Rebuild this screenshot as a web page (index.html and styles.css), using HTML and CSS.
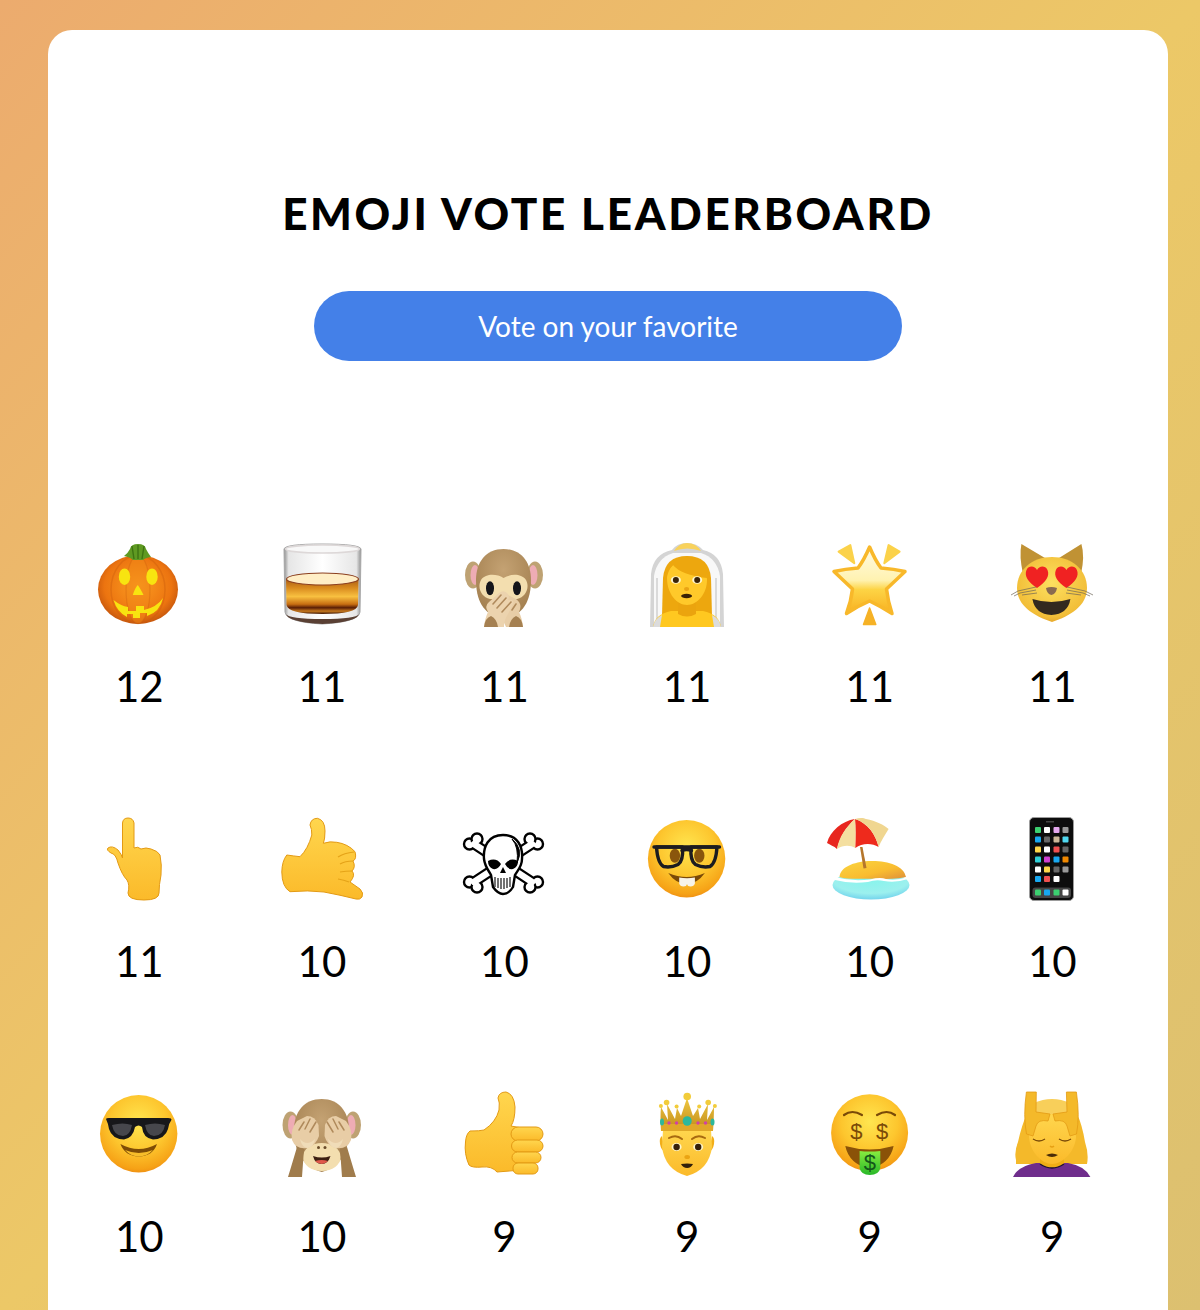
FILE: index.html
```html
<!doctype html>
<html lang="en">
<head>
    <meta charset="UTF-8">
    <title>Emoji Vote Leaderboard</title>
    <link rel="stylesheet" href="styles.css">
</head>
<body>
    <svg class="shared-defs" aria-hidden="true">
        <defs>
            <linearGradient id="skin" x1="0" y1="0" x2="0" y2="1">
                <stop offset="0" stop-color="#ffd64e"/>
                <stop offset="1" stop-color="#fbba2a"/>
            </linearGradient>
            <radialGradient id="face" cx=".5" cy=".36" r=".66">
                <stop offset="0" stop-color="#ffe650"/>
                <stop offset=".55" stop-color="#fdc62e"/>
                <stop offset=".9" stop-color="#f6a216"/>
                <stop offset="1" stop-color="#ee8c12"/>
            </radialGradient>
            <radialGradient id="fur" cx=".5" cy=".3" r=".75">
                <stop offset="0" stop-color="#c4a273"/>
                <stop offset="1" stop-color="#a07c4c"/>
            </radialGradient>
            <radialGradient id="pumpkin" cx=".5" cy=".45" r=".6">
                <stop offset="0" stop-color="#fb9c20"/>
                <stop offset=".7" stop-color="#ec7410"/>
                <stop offset="1" stop-color="#b84c0c"/>
            </radialGradient>
            <linearGradient id="glass" x1="0" y1="0" x2="1" y2="0">
                <stop offset="0" stop-color="#8f8f8f"/>
                <stop offset=".06" stop-color="#e6e6e6"/>
                <stop offset=".5" stop-color="#ffffff"/>
                <stop offset=".94" stop-color="#e6e6e6"/>
                <stop offset="1" stop-color="#8f8f8f"/>
            </linearGradient>
            <linearGradient id="whisky" x1="0" y1="0" x2="0" y2="1">
                <stop offset="0" stop-color="#a85c14"/>
                <stop offset=".25" stop-color="#d88a1e"/>
                <stop offset=".5" stop-color="#f8c040"/>
                <stop offset=".72" stop-color="#c86e12"/>
                <stop offset=".82" stop-color="#5a1e06"/>
                <stop offset=".92" stop-color="#c87a1e"/>
                <stop offset="1" stop-color="#3e1606"/>
            </linearGradient>
            <linearGradient id="star" x1="0" y1="0" x2="0" y2="1">
                <stop offset="0" stop-color="#fffbe6"/>
                <stop offset=".5" stop-color="#fff2b0"/>
                <stop offset=".64" stop-color="#fdd445"/>
                <stop offset="1" stop-color="#f8b020"/>
            </linearGradient>
            <radialGradient id="catface" cx=".5" cy=".4" r=".65">
                <stop offset="0" stop-color="#fde060"/>
                <stop offset=".8" stop-color="#f2be38"/>
                <stop offset="1" stop-color="#e09c28"/>
            </radialGradient>
            <linearGradient id="sand" x1="0" y1="0" x2="1" y2="1">
                <stop offset="0" stop-color="#fbd640"/>
                <stop offset=".6" stop-color="#f9bc30"/>
                <stop offset="1" stop-color="#dd8f3a"/>
            </linearGradient>
            <radialGradient id="water" cx=".5" cy=".3" r=".7">
                <stop offset="0" stop-color="#86f4ec"/>
                <stop offset=".7" stop-color="#9cf0ee"/>
                <stop offset="1" stop-color="#74d4ec"/>
            </radialGradient>
            <linearGradient id="gold" x1="0" y1="0" x2="0" y2="1">
                <stop offset="0" stop-color="#f0c840"/>
                <stop offset="1" stop-color="#c08a1a"/>
            </linearGradient>
            <linearGradient id="bill" x1="0" y1="0" x2="0" y2="1">
                <stop offset="0" stop-color="#88ec40"/>
                <stop offset="1" stop-color="#28b828"/>
            </linearGradient>
        </defs>
    </svg>

    <main class="card">
        <h1 class="title">EMOJI VOTE LEADERBOARD</h1>
        <a class="vote-link" href="#">Vote on your favorite</a>

        <div class="board">
            <!-- jack-o-lantern -->
            <div class="entry">
                <svg class="emoji" viewBox="0 0 84 84">
                    <ellipse cx="41" cy="47.5" rx="40" ry="34.5" fill="url(#pumpkin)"/>
                    <ellipse cx="41" cy="47.5" rx="27" ry="34" fill="none" stroke="#c65a0c" stroke-opacity=".35" stroke-width="1.5"/>
                    <ellipse cx="41" cy="47.5" rx="12" ry="34" fill="#f28a18" fill-opacity=".5" stroke="#c65a0c" stroke-opacity=".3" stroke-width="1.2"/>
                    <path d="M27 14 Q31 11 33 7 Q34 2 41 2 Q48 2 49 7 Q51 11 54 15 Q48 16 46 18 L36 18 Q33 15 27 14Z" fill="#5f9a22"/>
                    <path d="M35 4 L37 17 M41 3 L41 17 M47 4 L45 17" stroke="#3f7412" stroke-width="1.4" fill="none"/>
                    <ellipse cx="27.5" cy="34.7" rx="5.7" ry="8.3" fill="#f8e410"/>
                    <ellipse cx="55" cy="34.7" rx="5.7" ry="8.3" fill="#f8e410"/>
                    <path d="M40.8 43 Q43 46 46.5 53 L35.8 53 Q38 46 40.8 43Z" fill="#f8e410"/>
                    <path d="M16.5 58 Q24 64 31 65 L31 69 L39 69 L39 64 L47 64 L47 68 Q60 65 66 56 Q63 70 50 74 L50 71 L43 71 L43 76 L36 76 L36 72 L30 72 L30 75 Q20 70 16.5 58Z" fill="#f8e410"/>
                </svg>
                <div class="count">12</div>
            </div>

            <!-- tumbler glass -->
            <div class="entry">
                <svg class="emoji" viewBox="0 0 84 84">
                    <path d="M4 7 L5 70 Q6 80 42 82 Q79 80 80 70 L81 7 Q80 2 42 2 Q5 2 4 7Z" fill="url(#glass)" stroke="#a8a8a8" stroke-width="1"/>
                    <ellipse cx="42.5" cy="7" rx="37" ry="4" fill="#f8f8f8" stroke="#ddd8d8" stroke-width="1.5"/>
                    <path d="M6 37 L6.5 63 Q8 72 42.5 72 Q77 72 78 63 L78.5 37Z" fill="url(#whisky)"/>
                    <ellipse cx="42.5" cy="37" rx="36" ry="6" fill="#ffeec6" stroke="#8c4020" stroke-width="1.2"/>
                    <path d="M6 72 Q8 80 42.5 82 Q77 80 79 72 Q76 77 42.5 77 Q9 77 6 72Z" fill="#5a4034"/>
                </svg>
                <div class="count">11</div>
            </div>

            <!-- speak-no-evil monkey -->
            <div class="entry">
                <svg class="emoji" viewBox="0 0 84 84">
                    <ellipse cx="11" cy="33" rx="8" ry="13.5" fill="#bea273"/>
                    <ellipse cx="13" cy="33" rx="4.5" ry="10" fill="#eeacb4"/>
                    <ellipse cx="73" cy="33" rx="8" ry="13.5" fill="#bea273"/>
                    <ellipse cx="71" cy="33" rx="4.5" ry="10" fill="#eeacb4"/>
                    <path d="M41.5 7 C24 7 14 20 14 38 C14 56 20 74 41.5 76 C63 74 69 56 69 38 C69 20 59 7 41.5 7Z" fill="url(#fur)"/>
                    <path d="M41.5 36 C35 32 24 31 19 38 C15 45 19 55 28 57 L55 57 C64 55 68 45 64 38 C59 31 48 32 41.5 36Z" fill="#f3deaf"/>
                    <ellipse cx="28" cy="46.3" rx="4" ry="7" fill="#15151a"/>
                    <ellipse cx="55" cy="46.3" rx="4" ry="7" fill="#15151a"/>
                    <path d="M61 85 Q60 76 57 70 Q61 62 54 57 L44 52 Q38 50 37 56 L38 72 L44 85Z" fill="#e8cda6"/>
                    <path d="M22 85 Q23 76 26 70 Q22 64 27 60 L37 51 Q42 47 46 52 Q48 55 46 58 L50 58 Q53 60 50 64 L46 72 Q42 78 42 85Z" fill="#ecd3ae"/>
                    <path d="M22 85 Q23 76 29 74 Q35 77 36 85Z M61 85 Q60 76 54 74 Q48 77 47 85Z" fill="#a58051"/>
                    <path d="M31 62 L39 53 M35 66 L44 56 M40 70 L49 60 M54 62 L50 68" stroke="#b08a5c" stroke-width="1.6" fill="none" stroke-linecap="round"/>
                </svg>
                <div class="count">11</div>
            </div>

            <!-- bride with veil -->
            <div class="entry">
                <svg class="emoji" viewBox="0 0 84 84">
                    <path d="M5 85 L6 32 Q8 12 27 8 Q32 1 42 1 Q52 1 58 8 Q76 12 78 32 L79 85Z" fill="#d4d4d4"/>
                    <path d="M9 85 L9 34 Q12 16 28 11 L56 11 Q72 16 75 34 L75 85Z" fill="#f8f8f8"/>
                    <path d="M12 80 L12 36 M71 80 L71 36" stroke="#cfcfcf" stroke-width="1.5" fill="none"/>
                    <path d="M29 9 Q34 1 42 1 Q51 1 56 9 Q42 4 29 9Z" fill="#f8d25c"/>
                    <path d="M17 74 L18 36 Q20 14 42 14 Q64 14 66 36 L67 74Z" fill="#eda70e"/>
                    <path d="M8 85 Q10 72 26 69 L58 69 Q74 72 76 85Z" fill="#ffc820"/>
                    <path d="M8 85 Q10 76 17 73 L15 85Z M76 85 Q74 76 67 73 L69 85Z" fill="#dcdcdc"/>
                    <path d="M33 58 L51 58 L51 72 Q42 77 33 72Z" fill="#eba40e"/>
                    <path d="M22 36 C22 24 30 20 42 20 C54 20 62 26 62 38 C62 52 52 63 42 63 C32 63 22 52 22 36Z" fill="#ffc92a"/>
                    <path d="M21 38 Q23 28 28 23 Q36 33 62 36 Q63 24 54 17 Q42 12 30 17 Q20 24 21 38Z" fill="#eda70e"/>
                    <ellipse cx="30.9" cy="38" rx="5" ry="3.8" fill="#fff7d0"/>
                    <circle cx="30.9" cy="38" r="3" fill="#3a2408"/>
                    <ellipse cx="52.2" cy="38" rx="5" ry="3.8" fill="#fff7d0"/>
                    <circle cx="52.2" cy="38" r="3" fill="#3a2408"/>
                    <ellipse cx="41.6" cy="47" rx="2.6" ry="2" fill="#eaa414"/>
                    <ellipse cx="41.6" cy="54" rx="5.5" ry="2.2" fill="#3a2206"/>
                </svg>
                <div class="count">11</div>
            </div>

            <!-- glowing star -->
            <div class="entry">
                <svg class="emoji" viewBox="0 0 84 84">
                    <path d="M41.6 5 Q47 18 53 26 Q66 27 77 29.5 Q68 38 58.500 47 Q60 60 64 71.5 Q52 64 41.6 59 Q30 64 18.5 71.5 Q23 60 24.5 47 Q15 38 6 29.5 Q17 27 30 26 Q36 18 41.6 5Z" fill="url(#star)" stroke="#f8b82a" stroke-width="3.5" stroke-linejoin="round"/>
                    <path d="M10.6 9.7 L22.3 3 L26.3 21.3Z" fill="#fbd24a" stroke="#fbd24a" stroke-width="2" stroke-linejoin="round"/>
                    <path d="M71.6 9.7 L60.6 3 L56.3 21.3Z" fill="#fbd24a" stroke="#fbd24a" stroke-width="2" stroke-linejoin="round"/>
                    <path d="M41.6 66 L35.5 82.5 L47.8 82.5Z" fill="#f6b226" stroke="#f6b226" stroke-width="1.5" stroke-linejoin="round"/>
                </svg>
                <div class="count">11</div>
            </div>

            <!-- heart-eyes cat -->
            <div class="entry">
                <svg class="emoji" viewBox="0 0 84 84">
                    <path d="M11.4 2 L35 16 L13 32 Q9 14 11.4 2Z M71.4 2 L49 16 L71 32 Q75 14 71.4 2Z" fill="#c09234"/>
                    <path d="M42 15 C22 15 7 28 7 46 C7 64 24 74 42 80 C60 74 77 64 77 46 C77 28 62 15 42 15Z" fill="url(#catface)"/>
                    <path d="M27 46 C18 40 14 34 16.5 28 C19 23 25 24 27 28 C29 24 35 23 37.5 28 C40 34 36 40 27 46Z" fill="#f02222"/>
                    <path d="M56.4 46 C47.4 40 43.4 34 45.9 28 C48.4 23 54.4 24 56.4 28 C58.4 24 64.4 23 66.9 28 C69.4 34 65.4 40 56.4 46Z" fill="#f02222"/>
                    <path d="M36 46 Q41.4 44 47 46 Q46 52 41.4 53 Q37 52 36 46Z" fill="#8a6a50"/>
                    <path d="M26 45 L8 49 L1 53 M26 48 L10 51 L4 54 M27 51 L12 53 M57 45 L75 49 L83 53 M57 48 L73 51 L80 54 M56 51 L71 53" stroke="#6d6458" stroke-width=".7" fill="none"/>
                    <path d="M22.4 57 Q41.4 63 60.4 57 Q58 72 41.4 73 Q25 72 22.4 57Z" fill="#33291f"/>
                </svg>
                <div class="count">11</div>
            </div>

            <!-- point up -->
            <div class="entry">
                <svg class="emoji" viewBox="0 0 84 84">
                    <path d="M25.5 6 Q26 1 31 1 Q36 1 37 6 L37 31 Q41 29 44 32 Q49 30 54 32 Q61 34 63 38 Q65 48 64 58 Q62 68 62 76 Q62 83 47 83 Q31 83 31 76 Q33 68 30 63 Q25 58 21 46 Q19 37 14 36 Q9 33 11 31 Q15 28 21 33 Q25 38 25.5 41Z" fill="url(#skin)" stroke="#e39a14" stroke-width="1"/>
                </svg>
                <div class="count">11</div>
            </div>

            <!-- call me hand -->
            <div class="entry">
                <svg class="emoji" viewBox="0 0 84 84">
                    <path d="M6.8 38 Q14 39 20 39.7 Q28 32 31.8 18 Q32 12 30 8 Q31 1.3 37.4 1.3 Q45 3 45 14 Q45 22 43.4 26.3 Q50 24 56.8 25.3 Q68 27 75 34.7 Q77 42 73 44 Q76 50 72 54 Q76 58 70 65 L80 72 Q84 76 82 80 Q80 83 76 82 Q60 78 44 75 Q28 73 10 74.7 Q2 70 1.8 55 Q2 44 6.8 38Z" fill="url(#skin)" stroke="#e39a14" stroke-width="1"/>
                    <path d="M74 35 Q64 36 58 40 M73 44 Q65 44 60 47 M72 54 Q66 54 60 55 M69 65 Q64 63 58 62" stroke="#e5a318" stroke-width="1.2" fill="none"/>
                </svg>
                <div class="count">10</div>
            </div>

            <!-- skull and crossbones -->
            <div class="entry">
                <svg class="emoji" viewBox="0 0 84 84">
                    <g class="bone-line">
                        <path d="M12 27 L70 65 M70 27 L12 65" stroke="#000" stroke-width="11"/>
                        <circle cx="7.5" cy="27" r="5.5" fill="#fff" stroke="#000" stroke-width="2.4"/>
                        <circle cx="15" cy="22" r="5.5" fill="#fff" stroke="#000" stroke-width="2.4"/>
                        <circle cx="75.5" cy="27" r="5.5" fill="#fff" stroke="#000" stroke-width="2.4"/>
                        <circle cx="68" cy="22" r="5.5" fill="#fff" stroke="#000" stroke-width="2.4"/>
                        <circle cx="7.5" cy="65" r="5.5" fill="#fff" stroke="#000" stroke-width="2.4"/>
                        <circle cx="15" cy="70" r="5.5" fill="#fff" stroke="#000" stroke-width="2.4"/>
                        <circle cx="75.5" cy="65" r="5.5" fill="#fff" stroke="#000" stroke-width="2.4"/>
                        <circle cx="68" cy="70" r="5.5" fill="#fff" stroke="#000" stroke-width="2.4"/>
                        <path d="M12 27 L70 65 M70 27 L12 65" stroke="#fff" stroke-width="6.4"/>
                    </g>
                    <path d="M41 18 C26 18 21 30 22 42 C23 50 27 54 29 58 L31 70 Q36 77 41 77 Q47 77 51 70 L53 58 C55 54 60 50 60 42 C61 30 56 18 41 18Z" fill="#fff" stroke="#000" stroke-width="2.4"/>
                    <path d="M50 22 Q57 30 55 46 Q62 32 50 22Z" fill="#000" stroke="#000" stroke-width="1"/>
                    <path d="M26 44 Q34 40 39 47 Q36 53 31 52 Q26 50 26 44Z M56 44 Q48 40 43 47 Q46 53 51 52 Q56 50 56 44Z" fill="#000"/>
                    <path d="M41 50 L44 56 L38 56Z" fill="#000"/>
                    <path d="M33 60 L33 70 M36 61 L36 71 M39 61 L39 72 M42 61 L42 72 M45 61 L45 71 M48 60 L48 70" stroke="#000" stroke-width="1.1"/>
                </svg>
                <div class="count">10</div>
            </div>

            <!-- nerd face -->
            <div class="entry">
                <svg class="emoji" viewBox="0 0 84 84">
                    <circle cx="41.6" cy="41.7" r="38.7" fill="url(#face)"/>
                    <ellipse cx="29.9" cy="38.7" rx="5.2" ry="7" fill="#8a560c"/>
                    <ellipse cx="54.3" cy="38.7" rx="5.2" ry="7" fill="#8a560c"/>
                    <path d="M11.5 30 L37.5 30 Q38.5 44 33 47.5 Q26 51 18.5 49.5 Q12.5 46 11.5 30Z M46 30 L72 30 Q71 46 65 49.5 Q57.5 51 50.5 47.5 Q45 44 46 30Z" fill="none" stroke="#1c1c20" stroke-width="3.4" stroke-linejoin="round"/>
                    <path d="M9 30 L74.5 30 M37 33.5 Q41.6 31.5 46.5 33.5" fill="none" stroke="#1c1c20" stroke-width="3.4" stroke-linecap="round"/>
                    <path d="M23.2 56 Q41.6 64 59.9 56 Q52 67 41.6 67 Q31 67 23.2 56Z" fill="#7a4a08"/>
                    <path d="M34.2 60.5 Q42 62 49.9 60.5 L49.9 66.5 Q49 69.5 45.5 69.5 Q42.5 69.5 42 67 Q41.5 69.5 38.5 69.5 Q35 69.5 34.2 66.5Z" fill="#f7f3e8"/>
                </svg>
                <div class="count">10</div>
            </div>

            <!-- desert island -->
            <div class="entry">
                <svg class="emoji" viewBox="0 0 84 84">
                    <ellipse cx="43" cy="68" rx="38.5" ry="14.5" fill="url(#water)"/>
                    <path d="M11.6 60 C12 50 26 45 40 44 C58 43 76 48 78 60 C68 62 60 62 50 62 C36 61 20 63 11.6 60Z" fill="url(#sand)"/>
                    <path d="M7 60 Q24 65 42 62.5 Q52 60 58 62 Q68 64 80 60 L80 62 Q68 66 56 64 Q48 62 40 65 Q22 67 7 63Z" fill="#fff"/>
                    <path d="M32 30 L34.5 30 L38.5 51 L35.5 51.5Z" fill="#b5762c"/>
                    <path d="M-1 26 C2 14 14 4 27 2 C18 10 12 20 9 32 C6 29 2 28 -1 26Z" fill="#e8261e"/>
                    <path d="M27 2 C18 10 11 20 9 32 C15 28 22 28 27.3 31 C28 20 28 10 27 2Z" fill="#f4dfa0"/>
                    <path d="M27 2 C28 10 28 20 27.3 31 C34 26 44 26 50.6 30 C48 18 40 6 27 2Z" fill="#ee2a1c"/>
                    <path d="M27 2 C31 0.5 36 0.5 38 2 C48 4 56 8 60.6 12 C57 18 53 24 50.6 30 C48 18 40 6 27 2Z" fill="#f0d690"/>
                </svg>
                <div class="count">10</div>
            </div>

            <!-- mobile phone -->
            <div class="entry">
                <svg class="emoji" viewBox="0 0 84 84">
                    <rect x="19.5" y="0.5" width="44" height="83" rx="4.5" fill="#0d0d0d" stroke="#9c9c9c" stroke-width="1"/>
                    <rect x="36" y="4" width="8" height="1.5" fill="#444"/>
                    <g class="apps">
                        <rect x="25" y="10" width="6" height="6" rx="1" fill="#3cd070"/>
                        <rect x="34" y="10" width="6" height="6" rx="1" fill="#fff"/>
                        <rect x="43.5" y="10" width="6" height="6" rx="1" fill="#e4a8ee"/>
                        <rect x="52.5" y="10" width="6" height="6" rx="1" fill="#999"/>
                        <rect x="25" y="19.5" width="6" height="6" rx="1" fill="#18a8f0"/>
                        <rect x="34" y="19.5" width="6" height="6" rx="1" fill="#666"/>
                        <rect x="43.5" y="19.5" width="6" height="6" rx="1" fill="#cdb99a"/>
                        <rect x="52.5" y="19.5" width="6" height="6" rx="1" fill="#50d8f0"/>
                        <rect x="25" y="29.5" width="6" height="6" rx="1" fill="#ffd84a"/>
                        <rect x="34" y="29.5" width="6" height="6" rx="1" fill="#fff"/>
                        <rect x="43.5" y="29.5" width="6" height="6" rx="1" fill="#f05050"/>
                        <rect x="52.5" y="29.5" width="6" height="6" rx="1" fill="#666"/>
                        <rect x="25" y="39.5" width="6" height="6" rx="1" fill="#30d0d8"/>
                        <rect x="34" y="39.5" width="6" height="6" rx="1" fill="#d040d0"/>
                        <rect x="43.5" y="39.5" width="6" height="6" rx="1" fill="#18a8f0"/>
                        <rect x="52.5" y="39.5" width="6" height="6" rx="1" fill="#f08800"/>
                        <rect x="25" y="49.5" width="6" height="6" rx="1" fill="#fff"/>
                        <rect x="34" y="49.5" width="6" height="6" rx="1" fill="#ffd84a"/>
                        <rect x="43.5" y="49.5" width="6" height="6" rx="1" fill="#666"/>
                        <rect x="52.5" y="49.5" width="6" height="6" rx="1" fill="#999"/>
                        <rect x="25" y="59" width="6" height="6" rx="1" fill="#18a8f0"/>
                        <rect x="34" y="59" width="6" height="6" rx="1" fill="#f05050"/>
                        <rect x="43.5" y="59" width="6" height="6" rx="1" fill="#fff"/>
                        <rect x="22.5" y="70.5" width="38.5" height="10.5" rx="3" fill="#454545"/>
                        <rect x="25" y="72.5" width="6" height="6" rx="1" fill="#3cd070"/>
                        <rect x="34" y="72.5" width="6" height="6" rx="1" fill="#18a8f0"/>
                        <rect x="43.5" y="72.5" width="6" height="6" rx="1" fill="#3cd070"/>
                        <rect x="52.5" y="72.5" width="6" height="6" rx="1" fill="#fff"/>
                    </g>
                </svg>
                <div class="count">10</div>
            </div>

            <!-- sunglasses face -->
            <div class="entry">
                <svg class="emoji" viewBox="0 0 84 84">
                    <circle cx="41.7" cy="41.7" r="38.7" fill="url(#face)"/>
                    <path d="M9 27 Q9 26 12 26 L71 26 Q75 26 74.4 28 Q72 31 71 37 Q68 47 56 47.5 Q46 46 45 35 Q41.5 32 38 35 Q36 46 27 47.5 Q15 47 12 37 Q11 31 9 27Z" fill="#17171a"/>
                    <path d="M15 33 Q26 30 35 33 Q33 44 26 44 Q17 44 15 33Z M48 33 Q58 30 68 33 Q66 44 57 44 Q50 44 48 33Z" fill="#47474c"/>
                    <path d="M23.4 52 Q41.7 62 60 52 Q56 64 41.7 64.5 Q28 64 23.4 52Z" fill="#7e4c06"/>
                    <path d="M28 58 Q41.7 64 56 58 Q50 64.5 41.7 64.5 Q34 64.5 28 58Z" fill="#f7bd2a"/>
                </svg>
                <div class="count">10</div>
            </div>

            <!-- see-no-evil monkey -->
            <div class="entry">
                <svg class="emoji" viewBox="0 0 84 84">
                    <ellipse cx="10.5" cy="33" rx="8" ry="13.5" fill="#bea273"/>
                    <ellipse cx="12.5" cy="33" rx="4.5" ry="10" fill="#eeacb4"/>
                    <ellipse cx="73" cy="33" rx="8" ry="13.5" fill="#bea273"/>
                    <ellipse cx="71" cy="33" rx="4.5" ry="10" fill="#eeacb4"/>
                    <path d="M41.8 7 C24 7 14 20 14 38 C14 56 20 74 41.8 80 C63 74 69 56 69 38 C69 20 59 7 41.8 7Z" fill="url(#fur)"/>
                    <ellipse cx="41.8" cy="65" rx="19" ry="14" fill="#f3deaf"/>
                    <path d="M8 85 Q12 72 17 55 L24 57 L22 85Z M76 85 Q72 72 67 55 L60 57 L62 85Z" fill="#a07c4c"/>
                    <path d="M12 48 Q10 38 17 29 L27 24 Q35 24 38.500 33 L39 44 Q36 53 28 56 Q16 58 12 48Z" fill="#e8cda6"/>
                    <path d="M71 48 Q73 38 66 29 L56 24 Q48 24 45 33 L44.500 44 Q47 53 55 56 Q67 58 71 48Z" fill="#e8cda6"/>
                    <path d="M24 30 L19 38 M30 27 L25 37 M36 30 L30 40 M59 30 L64 38 M53 27 L58 37 M47 30 L53 40" stroke="#b08a5c" stroke-width="1.5" fill="none" stroke-linecap="round"/>
                    <path d="M20 47 Q27 55 35 47 Q34 54 28 56 Q22 56 20 47Z M63 47 Q56 55 48 47 Q49 54 55 56 Q61 56 63 47Z" fill="#f0dcb8"/>
                    <circle cx="38.5" cy="55.5" r="1.5" fill="#6a4c2a"/>
                    <circle cx="45" cy="55.5" r="1.5" fill="#6a4c2a"/>
                    <path d="M33 64 Q41.8 67 50.5 64 Q48 72 41.8 72 Q35 72 33 64Z" fill="#3c1f12"/>
                    <path d="M35 69 Q41.8 67 48 69 Q45 72 41.8 72 Q38 72 35 69Z" fill="#e0584a"/>
                </svg>
                <div class="count">10</div>
            </div>

            <!-- thumbs up -->
            <div class="entry">
                <svg class="emoji" viewBox="0 0 84 84">
                    <path d="M8 39 Q18 39 22 38 Q34 30 37 18 Q38 10 36 6 Q37 0 44 0 Q52 2 53 15 Q53 28 49 34 L60 36 L60 78 L35 80 Q30 74 20 75 Q10 76 7 73 Q2 62 3.5 50 Q4 42 8 39Z" fill="url(#skin)" stroke="#e39a14" stroke-width="1"/>
                    <rect x="49" y="35" width="32" height="14" rx="7" fill="url(#skin)" stroke="#e39a14" stroke-width="1"/>
                    <rect x="49.5" y="48" width="31.5" height="12" rx="6" fill="url(#skin)" stroke="#e39a14" stroke-width="1"/>
                    <rect x="50" y="60" width="29" height="11" rx="5.5" fill="url(#skin)" stroke="#e39a14" stroke-width="1"/>
                    <rect x="51" y="71" width="25" height="11" rx="5" fill="url(#skin)" stroke="#e39a14" stroke-width="1"/>
                </svg>
                <div class="count">9</div>
            </div>

            <!-- prince -->
            <div class="entry">
                <svg class="emoji" viewBox="0 0 84 84">
                    <path d="M15 52 Q14 46 17 44 L20 60 Q16 58 15 52Z M69 52 Q70 46 67 44 L64 60 Q68 58 69 52Z" fill="#f2ae18"/>
                    <path d="M18 38 L66 38 L67 55 Q64 78 42 84 Q20 78 17 55Z" fill="url(#skin)"/>
                    <path d="M16 39 Q15 24 16 15 L23 28 L22 12 L30 27 L32 16 L36 24 L42 6 L48 24 L53 16 L55 27 L63 12 L62 28 L69 15 Q69 24 68 39Z" fill="url(#gold)"/>
                    <path d="M16 32 L68 32 L68 39 L16 39Z" fill="#e0a828"/>
                    <g class="crown-beads">
                        <circle cx="42.2" cy="4.5" r="3.8" fill="#f2cc3a"/>
                        <circle cx="21.6" cy="10.5" r="2.8" fill="#f2cc3a"/>
                        <circle cx="63.2" cy="10.5" r="2.8" fill="#f2cc3a"/>
                        <circle cx="15.9" cy="14" r="2" fill="#f2cc3a"/>
                        <circle cx="69.9" cy="14" r="2" fill="#f2cc3a"/>
                        <circle cx="31.6" cy="14.5" r="2" fill="#f2cc3a"/>
                        <circle cx="54.2" cy="14.5" r="2" fill="#f2cc3a"/>
                    </g>
                    <ellipse cx="42.2" cy="29" rx="4.5" ry="4.8" fill="#2cb89c"/>
                    <ellipse cx="17" cy="30" rx="2" ry="3.5" fill="#2cb89c"/>
                    <ellipse cx="67.5" cy="30" rx="2" ry="3.5" fill="#2cb89c"/>
                    <circle cx="24" cy="31" r="1.7" fill="#d040a8"/>
                    <circle cx="31.5" cy="31" r="1.7" fill="#d040a8"/>
                    <circle cx="53" cy="31" r="1.7" fill="#d040a8"/>
                    <circle cx="60.5" cy="31" r="1.7" fill="#d040a8"/>
                    <path d="M24 46 Q31 42 37 47 M47 47 Q53 42 60 46" stroke="#a86a10" stroke-width="2" fill="none" stroke-linecap="round"/>
                    <ellipse cx="31.6" cy="55" rx="5" ry="4" fill="#fff5c8"/>
                    <circle cx="31.6" cy="55" r="3.2" fill="#35200a"/>
                    <ellipse cx="53.2" cy="55" rx="5" ry="4" fill="#fff5c8"/>
                    <circle cx="53.2" cy="55" r="3.2" fill="#35200a"/>
                    <ellipse cx="42.2" cy="65" rx="2.8" ry="2" fill="#eaa414"/>
                    <path d="M36 72 Q42.2 71 48 72 Q46 76 42.2 76 Q38 76 36 72Z" fill="#33200a"/>
                </svg>
                <div class="count">9</div>
            </div>

            <!-- money-mouth face -->
            <div class="entry">
                <svg class="emoji" viewBox="0 0 84 84">
                    <circle cx="41.6" cy="40.7" r="38.5" fill="url(#face)"/>
                    <path d="M16 23 Q24 17 34 23 M49 23 Q59 17 67 23" stroke="#7a4a08" stroke-width="2.2" fill="none" stroke-linecap="round"/>
                    <text class="dollar" x="28.3" y="47">$</text>
                    <text class="dollar" x="54" y="47">$</text>
                    <path d="M17.3 54 Q41.6 61 65.6 54 Q62 72 41.6 77 Q21 72 17.3 54Z" fill="#8a5208"/>
                    <path d="M31.6 59 Q41.6 60 52.3 59 L52.3 76 Q51 83 41.8 83 Q33 83 31.6 76Z" fill="url(#bill)"/>
                    <text class="dollar bill-mark" x="41.8" y="78">$</text>
                </svg>
                <div class="count">9</div>
            </div>

            <!-- head massage -->
            <div class="entry">
                <svg class="emoji" viewBox="0 0 84 84">
                    <path d="M6 68 Q4 60 8 50 Q12 32 17 22 L67 22 Q72 32 75 50 Q79 62 77 72 L6 72Z" fill="#f4b92a"/>
                    <path d="M3 85 Q8 74 26 71 L58 71 Q75 74 80.4 85Z" fill="#6f2d8c"/>
                    <path d="M30 62 L54 62 L54 72 Q42 80 30 72Z" fill="#f0ad16"/>
                    <path d="M30 72 Q42 80 54 72" stroke="#1c1030" stroke-width="1.3" fill="none"/>
                    <ellipse cx="42" cy="20" rx="24" ry="13" fill="#f8cf5a"/>
                    <path d="M42 22 C30 22 19 30 19 45 C20 60 32 72 42 72 C52 72 65 60 66 45 C65 30 54 22 42 22Z" fill="url(#skin)"/>
                    <path d="M16.4 0 L26.3 0 L26 20 L40 22 L38 29 Q28 27 26 34 L23 44 L16.5 42 Q13 24 16.4 0Z" fill="#f4b92a" stroke="#e39a14" stroke-width=".8"/>
                    <path d="M56.4 0 L66.4 0 Q70 24 66.5 42 L60 44 L57 34 Q55 27 45 29 L43 22 L57 20Z" fill="#f4b92a" stroke="#e39a14" stroke-width=".8"/>
                    <path d="M23 47 Q29 51 35 47 M49 47 Q55 51 61 47" stroke="#7a4a08" stroke-width="1.3" fill="none"/>
                    <path d="M40 54 Q42 56 44 54" stroke="#e6a014" stroke-width="1.3" fill="none"/>
                    <path d="M36 63 Q42 60 48 63 Q42 67 36 63Z" fill="#4a2c08"/>
                </svg>
                <div class="count">9</div>
            </div>
        </div>
    </main>
</body>
</html>
```

FILE: styles.css
```css
html, body {
    height: 1310px;
    overflow: hidden;
}
body {
    margin: 0;
    padding: 30px 32px 0 48px;
    box-sizing: border-box;
    font-family: 'Lato', sans-serif;
    background: linear-gradient(to bottom right, #ecab6e 0%, #ecc867 50%, #dcc070 100%);
    color: #000;
}
.shared-defs {
    position: absolute;
    width: 0;
    height: 0;
}
.card {
    width: 1120px;
    min-height: 1400px;
    padding-top: 158px;
    background-color: #fff;
    border-radius: 24px;
}
.title {
    margin: 0;
    text-align: center;
    font-size: 44px;
    line-height: 50px;
    font-weight: 900;
    letter-spacing: 2.68px;
}
.vote-link {
    display: block;
    width: 588px;
    height: 70px;
    margin: 53px auto 0;
    border-radius: 35px;
    background-color: #4480e8;
    color: #fff;
    text-align: center;
    font-size: 28px;
    font-weight: 400;
    line-height: 70px;
    text-decoration: none;
}
.board {
    display: grid;
    grid-template-columns: repeat(6, 182.6px);
    grid-auto-rows: 275px;
    margin-top: 181px;
}
.entry {
    text-align: center;
}
.emoji {
    display: block;
    width: 84px;
    height: 84px;
    margin: 0 auto;
    overflow: visible;
}
.count {
    margin-top: 32px;
    font-size: 42px;
    line-height: 56px;
}
.bone-line path {
    stroke-linecap: round;
}
.dollar {
    font-family: 'Liberation Sans', sans-serif;
    font-size: 22px;
    fill: #7a4a08;
    text-anchor: middle;
}
.bill-mark {
    fill: #14561a;
}
```
